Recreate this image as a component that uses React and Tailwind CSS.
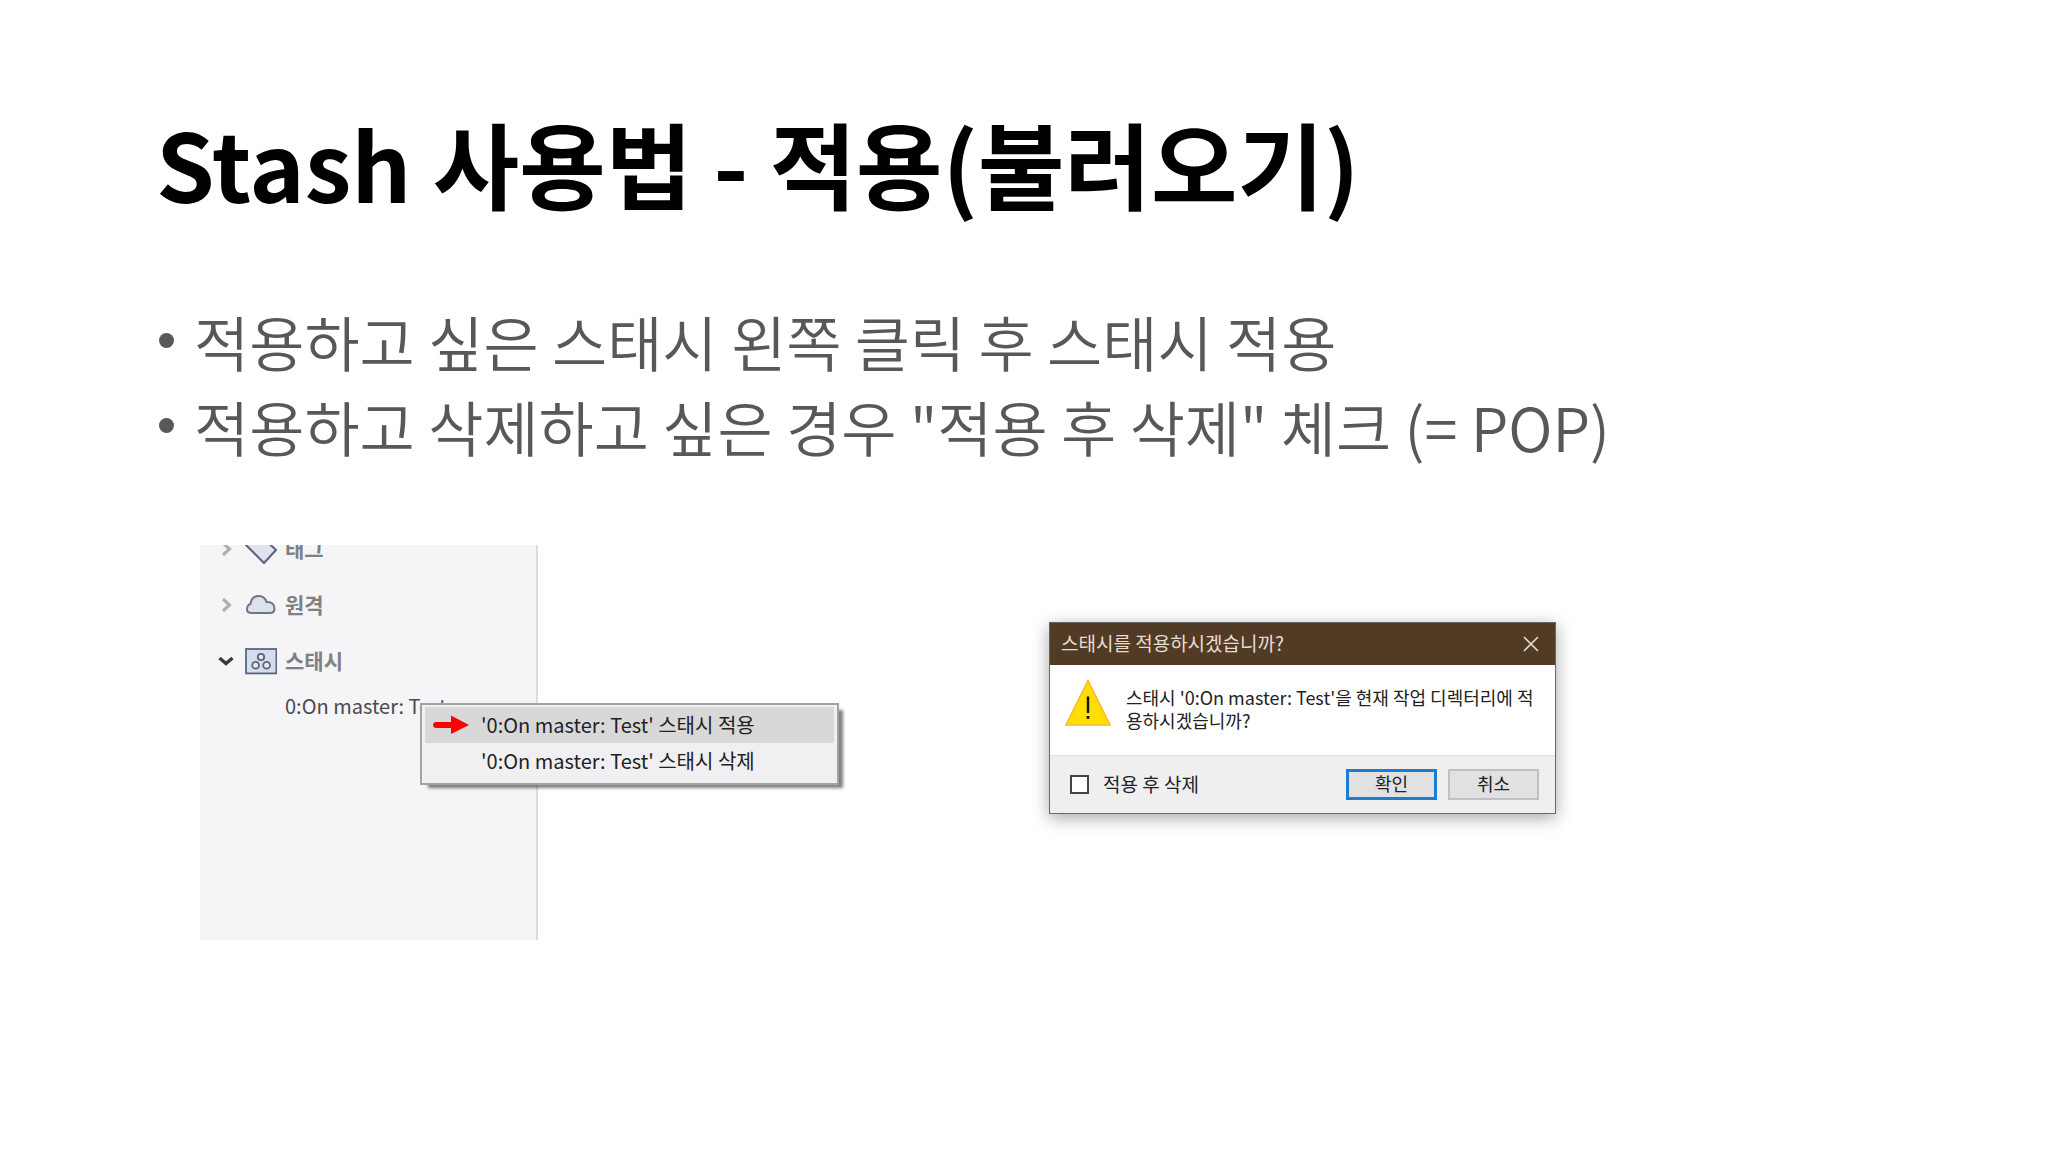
import React, { useState } from 'react';

function ArrowRight() {
    return (
        <svg className="w-4 h-4" viewBox="0 0 16 16" fill="none" stroke="#b0b0b2" strokeWidth="3.2">
            <path d="M5 2 L11.5 8 L5 14" />
        </svg>
    )
}

function ArrowDown() {
    return (
        <svg className="w-4 h-4" viewBox="0 0 16 16" fill="none" stroke="#3a3a3c" strokeWidth="3.4">
            <path d="M1.5 5 L8 10.5 L14.5 5" />
        </svg>
    )
}

function TagIcon() {
    return (
        <svg className="w-8 h-8" viewBox="0 0 32 32" fill="#dfe3ee" stroke="#5d6479" strokeWidth="2">
            <path d="M1 1 L14 1 L31 17 L19 30 L1 12 Z" />
        </svg>
    )
}

function CloudIcon() {
    return (
        <svg className="w-8 h-8" viewBox="0 0 32 32" fill="#dde1ea" stroke="#6f7488" strokeWidth="2">
            <path d="M7 24 C3.5 24 2 22.5 2 20.5 C2 17.5 3.5 15.5 5.5 15 C5.5 10.5 9 7 13.5 7 C17.5 7 20.5 9.5 21.5 13 C26.5 12.5 29.5 15.5 29.5 19.5 C29.5 22.5 28 24 25 24 Z" />
        </svg>
    )
}

function StashIcon() {
    return (
        <svg className="w-8 h-8" viewBox="0 0 32 32" stroke="#5a6580">
            <rect x="1" y="4" width="30.4" height="24.4" fill="#d5dcea" strokeWidth="1.8" />
            <g fill="#e4e8f1" strokeWidth="1.8">
                <circle cx="16" cy="12" r="3.2" />
                <circle cx="10.6" cy="20.2" r="3.4" />
                <circle cx="21.6" cy="20.2" r="3.4" />
            </g>
        </svg>
    )
}

function WarningIcon() {
    return (
        <svg className="w-12 h-12 shrink-0" viewBox="0 0 48 48">
            <path d="M24 1.5 L46 46 L2 46 Z" fill="#ffdf00" stroke="#fcb92c" strokeWidth="1.6" />
            <path d="M24 17.5 V34" stroke="#111" strokeWidth="2.4" />
            <rect x="22.6" y="37" width="2.8" height="2.8" fill="#111" />
        </svg>
    )
}

function SidebarRow({ arrow, icon, label }) {
    return (
        <li className="flex items-center h-14 pl-[18px]">
            {arrow}
            <span className="ml-[11px]">{icon}</span>
            <span className="ml-2 pb-px text-[21px] font-bold text-[#808083]">{label}</span>
        </li>
    )
}

function ContextMenu() {
    return (
        <div className="absolute left-[220px] top-[158px] w-[419px] px-[3px] pt-[2px] pb-1 border-2 border-[#a3a3a5] bg-[#f0eff1] shadow-[6px_5px_3px_-2px_rgba(0,0,0,0.5)] text-[20px] text-[#222]">
            <button className="flex items-center w-full h-9 pl-2 bg-[#d9d8d9]">
                <svg className="w-9 h-5" viewBox="0 0 36 20" fill="#fe0000">
                    <path d="M3 7 H18 V0.5 L36 10 L18 19 V13 H3 C-1 13 -1 7 3 7 Z" />
                </svg>
                <span className="ml-3 pb-px">'0:On master: Test' 스태시 적용</span>
            </button>
            <button className="flex items-center w-full h-9 pl-14 pb-px">'0:On master: Test' 스태시 삭제</button>
        </div>
    )
}

function Sidebar() {
    return (
        <div className="relative w-[338px] h-[395px] bg-[#f5f4f6] border-r-2 border-[#dcdbdd]">
            <div className="overflow-hidden">
                <ul className="-mt-6">
                    <SidebarRow arrow={<ArrowRight />} icon={<TagIcon />} label="태그" />
                    <SidebarRow arrow={<ArrowRight />} icon={<CloudIcon />} label="원격" />
                    <SidebarRow arrow={<ArrowDown />} icon={<StashIcon />} label="스태시" />
                    <li className="flex items-center h-9 pl-[85px] pb-[2px] text-[20px] text-[#4a4a4c]">0:On master: Test</li>
                </ul>
            </div>
            <ContextMenu />
        </div>
    )
}

function Dialog() {
    const [drop, setDrop] = useState(false);

    return (
        <div className="w-[507px] mt-[77px] border border-[#6d675c] bg-white shadow-[0_4px_16px_rgba(0,0,0,0.35)] text-[18px] text-[#222]">
            <div className="flex items-center justify-between h-[42px] pl-[11px] pr-4 pb-px bg-[#523b25] text-[#e6ddd0] text-[19px]">
                <span>스태시를 적용하시겠습니까?</span>
                <button aria-label="닫기">
                    <svg className="w-4 h-4" viewBox="0 0 16 16" stroke="#e6ddd0" strokeWidth="1.6">
                        <path d="M1 1 L15 15 M15 1 L1 15" />
                    </svg>
                </button>
            </div>
            <div className="flex h-[90px] pl-[14px] pr-4 pt-[14px]">
                <WarningIcon />
                <p className="ml-[14px] mt-[7px] leading-[23px] break-all">
                    스태시 '0:On master: Test'을 현재 작업 디렉터리에 적용하시겠습니까?
                </p>
            </div>
            <div className="flex items-center h-[58px] pl-5 pr-4 border-t border-[#dfdfdf] bg-[#f0eff0]">
                <input
                    id="drop"
                    type="checkbox"
                    checked={drop}
                    onChange={() => setDrop(!drop)}
                    className="appearance-none w-[19px] h-[19px] border-2 border-[#444] bg-white checked:bg-[#444]"
                />
                <label htmlFor="drop" className="ml-[14px] text-[19px]">적용 후 삭제</label>
                <button className="ml-auto w-[91px] h-[31px] border-3 border-[#1c7ed0] bg-[#e1e1e1] leading-5 pb-1">확인</button>
                <button className="ml-[11px] w-[91px] h-[31px] border-2 border-[#c0bfc1] bg-[#e1e1e1] leading-5 pb-1">취소</button>
            </div>
        </div>
    )
}

export default function App() {
    return (
        <div className="min-h-screen bg-white font-['Noto_Sans_CJK_KR',sans-serif]">
            <h1 className="pl-[156px] pt-24 text-[94px] leading-[132px] font-bold text-black">Stash 사용법 - 적용(불러오기)</h1>
            <ul className="pl-[159px] mt-[70px] text-[60px] leading-[85px] font-[350] text-[#585858]">
                <li className="flex items-center"><span className="w-[15px] h-[15px] mr-5 rounded-full bg-[#585858]"></span>적용하고 싶은 스태시 왼쪽 클릭 후 스태시 적용</li>
                <li className="flex items-center"><span className="w-[15px] h-[15px] mr-5 rounded-full bg-[#585858]"></span>적용하고 삭제하고 싶은 경우 "적용 후 삭제" 체크 (= POP)</li>
            </ul>
            <div className="grid grid-cols-2 items-start pl-[200px] pr-[150px] mt-[77px]">
                <Sidebar />
                <Dialog />
            </div>
        </div>
    )
}
